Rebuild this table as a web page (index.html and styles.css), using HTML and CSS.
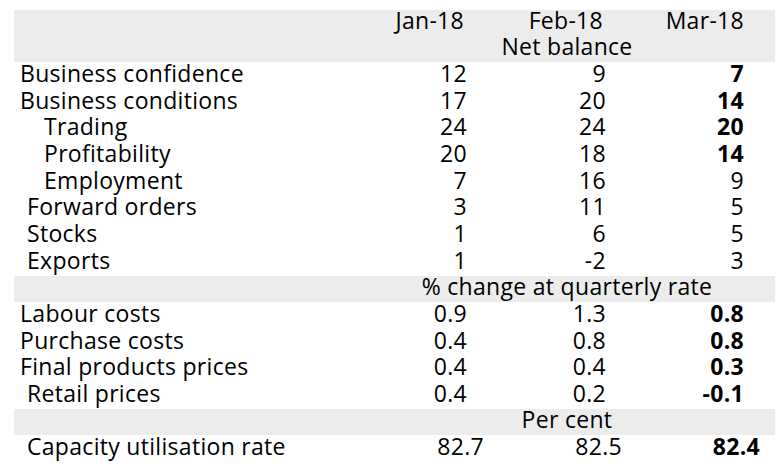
FILE: index.html
```html
<!DOCTYPE html>
<html>
<head>
<meta charset="utf-8">
<link rel="stylesheet" href="styles.css">
</head>
<body>
<div class="table">
  <div class="band head">
    <div class="row">
      <div class="label"></div>
      <div class="num hcell">Jan-18</div>
      <div class="num hcell">Feb-18</div>
      <div class="num hcell last">Mar-18</div>
    </div>
    <div class="row">
      <div class="label"></div>
      <div class="span">Net balance</div>
    </div>
  </div>
  <div class="row body"><div class="label">Business confidence</div><div class="num">12</div><div class="num">9</div><div class="num b">7</div></div>
  <div class="row body"><div class="label">Business conditions</div><div class="num">17</div><div class="num">20</div><div class="num b">14</div></div>
  <div class="row body"><div class="label ind2">Trading</div><div class="num">24</div><div class="num">24</div><div class="num b">20</div></div>
  <div class="row body"><div class="label ind2">Profitability</div><div class="num">20</div><div class="num">18</div><div class="num b">14</div></div>
  <div class="row body"><div class="label ind2">Employment</div><div class="num">7</div><div class="num">16</div><div class="num">9</div></div>
  <div class="row body"><div class="label ind1">Forward orders</div><div class="num">3</div><div class="num">11</div><div class="num">5</div></div>
  <div class="row body"><div class="label ind1">Stocks</div><div class="num">1</div><div class="num">6</div><div class="num">5</div></div>
  <div class="row body"><div class="label ind1">Exports</div><div class="num">1</div><div class="num">-2</div><div class="num">3</div></div>
  <div class="band row sub"><div class="label"></div><div class="span">% change at quarterly rate</div></div>
  <div class="row body"><div class="label">Labour costs</div><div class="num">0.9</div><div class="num">1.3</div><div class="num b">0.8</div></div>
  <div class="row body"><div class="label">Purchase costs</div><div class="num">0.4</div><div class="num">0.8</div><div class="num b">0.8</div></div>
  <div class="row body"><div class="label">Final products prices</div><div class="num">0.4</div><div class="num">0.4</div><div class="num b">0.3</div></div>
  <div class="row body"><div class="label ind1">Retail prices</div><div class="num">0.4</div><div class="num">0.2</div><div class="num b">-0.1</div></div>
  <div class="band row sub"><div class="label"></div><div class="span">Per cent</div></div>
  <div class="row body shifted"><div class="label ind1">Capacity utilisation rate</div><div class="num">82.7</div><div class="num">82.5</div><div class="num b">82.4</div></div>
</div>
</body>
</html>
```
FILE: styles.css
```css
html, body {
  margin: 0;
  padding: 0;
  background: #ffffff;
}
body {
  font-family: "Open Sans", "Noto Sans", sans-serif;
  font-size: 23px;
  letter-spacing: 0.3px;
  color: #000000;
}
.table {
  margin: 10px 0 0 14px;
  width: 761px;
}
.band {
  background: #ececec;
}
.row {
  display: grid;
  grid-template-columns: 376px 77px 139px 138px 31px;
  line-height: 21px;
  height: 26px;
  white-space: nowrap;
}
.row.body {
  height: 26.7px;
  line-height: 22px;
}
.row.sub {
  height: 26.5px;
  line-height: 21.5px;
}
.row.shifted {
  grid-template-columns: 376px 94px 138px 138px 15px;
}
.label {
  padding-left: 6px;
}
.label.ind1 {
  padding-left: 13px;
}
.label.ind2 {
  padding-left: 30px;
}
.num {
  text-align: right;
}
.hcell {
  padding-right: 3px;
}
.hcell.last {
  padding-right: 0;
}
.b {
  font-weight: 700;
}
.span {
  grid-column: 2 / 5;
  text-align: center;
}
```
